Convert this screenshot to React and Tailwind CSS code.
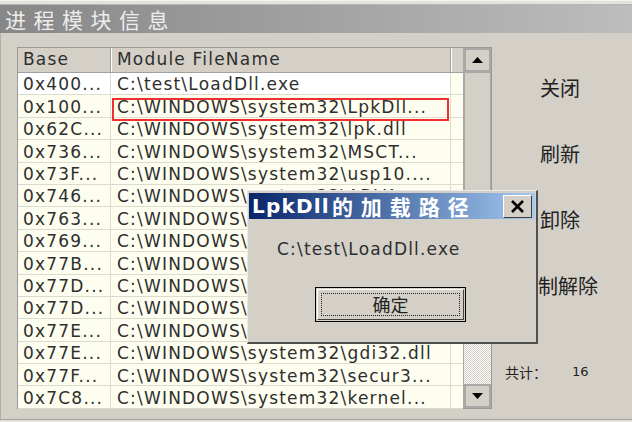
import React from "react";

const rows = [
  ["0x400...", "C:\\test\\LoadDll.exe"],
  ["0x100...", "C:\\WINDOWS\\system32\\LpkDll..."],
  ["0x62C...", "C:\\WINDOWS\\system32\\lpk.dll"],
  ["0x736...", "C:\\WINDOWS\\system32\\MSCT..."],
  ["0x73F...", "C:\\WINDOWS\\system32\\usp10...."],
  ["0x746...", "C:\\WINDOWS\\system32\\ADVA..."],
  ["0x763...", "C:\\WINDOWS\\system32\\comd..."],
  ["0x769...", "C:\\WINDOWS\\system32\\IMM3..."],
  ["0x77B...", "C:\\WINDOWS\\system32\\versi..."],
  ["0x77D...", "C:\\WINDOWS\\system32\\ADVA..."],
  ["0x77D...", "C:\\WINDOWS\\system32\\USER..."],
  ["0x77E...", "C:\\WINDOWS\\system32\\RPCR..."],
  ["0x77E...", "C:\\WINDOWS\\system32\\gdi32.dll"],
  ["0x77F...", "C:\\WINDOWS\\system32\\secur3..."],
  ["0x7C8...", "C:\\WINDOWS\\system32\\kernel..."],
];

const listFont = "font-['DejaVu_Sans',sans-serif] text-[17px] tracking-[1.2px] text-[#2e2e2e]";
const cjk = "font-['Noto_Sans_CJK_SC',sans-serif]";

export default function App() {
  return (
    <div className="relative w-[632px] h-[422px] overflow-hidden bg-[#d4d0c8] flex flex-col">
      {/* top strip */}
      <div className="h-[5px] border-t border-[#f4f4f0] bg-[#e4e2dc] border-b border-b-[#b8b6b0]" />
      {/* title bar */}
      <div className="h-[28px] bg-gradient-to-r from-[#878787] to-[#bdbdbd] flex items-center pl-[5px]">
        <span className={`${cjk} text-[21px] leading-none tracking-[7.5px] text-[#ededed]`}>进程模块信息</span>
      </div>
      {/* content */}
      <div className="flex flex-1 border-l border-[#b0b0b0]">
        <div className="ml-[16px] mt-[14px] w-[475px] h-[362px] border border-[#9a9a9a] flex">
          {/* table */}
          <div className="w-[445px] flex flex-col bg-[#fefef0]">
            <div className={`h-[25px] flex bg-[#d4d0c8] border-b border-[#a0a0a0] ${listFont}`}>
              <div className="w-[93px] pl-[5px] flex items-center border-r border-[#a0a0a0] shadow-[1px_0_0_#ffffff]">Base</div>
              <div className="w-[340px] pl-[6px] flex items-center border-r border-[#a0a0a0] shadow-[1px_0_0_#ffffff]">Module FileName</div>
              <div className="flex-1" />
            </div>
            {rows.map((r, i) => (
              <div key={i} className={`h-[22.4px] flex border-b border-[#dcdccc] ${listFont}`}>
                <div className={`w-[93px] pl-[5px] pt-[3px] flex items-center border-r border-[#dcdccc] whitespace-nowrap overflow-hidden ${i === 0 ? "bg-white" : ""}`}>{r[0]}</div>
                <div className={`w-[340px] pl-[6px] pt-[3px] flex items-center border-r border-[#dcdccc] whitespace-nowrap overflow-hidden ${i === 0 ? "bg-white" : ""}`}>{r[1]}</div>
                <div className="flex-1" />
              </div>
            ))}
          </div>
          {/* scrollbar */}
          <div className="w-[28px] flex flex-col bg-[#d4d0c8] border-l border-[#a8a8a8]">
            <div className="h-[24px] border-2 border-[#a8a8a8] flex items-center justify-center">
              <svg width="11" height="6" viewBox="0 0 11 6"><path d="M0 6 L5.5 0 L11 6 Z" fill="#000" /></svg>
            </div>
            <div className="h-[270px] border border-[#a8a8a8] bg-[#d4d0c8]" />
            <div className="flex-1 bg-[image:repeating-conic-gradient(#ffffff_0%_25%,#d4d0c8_0%_50%)] bg-[length:2px_2px]" />
            <div className="h-[24px] border-2 border-[#a8a8a8] flex items-center justify-center">
              <svg width="11" height="6" viewBox="0 0 11 6"><path d="M0 0 L5.5 6 L11 0 Z" fill="#000" /></svg>
            </div>
          </div>
        </div>
        {/* right side labels */}
        <div className="flex flex-col pt-[43px]">
          <div className="pl-[48px] flex flex-col gap-[42px]">
            <span className={`${cjk} text-[20px] leading-[24px] text-[#222]`}>关闭</span>
            <span className={`${cjk} text-[20px] leading-[24px] text-[#222]`}>刷新</span>
            <span className={`${cjk} text-[20px] leading-[24px] text-[#222]`}>卸除</span>
            <span className={`${cjk} text-[20px] leading-[24px] text-[#222] -ml-[2px]`}>制解除</span>
          </div>
          <div className="pl-[13px] mt-[66px] flex items-center h-[16px]">
            <span className={`${cjk} text-[14px] text-[#222]`}>共计：</span>
            <span className="ml-[25px] font-['DejaVu_Sans',sans-serif] text-[13px] text-[#222]">16</span>
          </div>
        </div>
      </div>
      {/* bottom edge */}
      <div className="h-[3px] border-t border-[#a0a0a0] bg-[#e4e2dc]" />

      {/* red highlight */}
      <div className="absolute left-[112px] top-[98px] w-[337px] h-[23px] border-2 border-[#ee3030]" />

      {/* dialog */}
      <div className="absolute left-[247px] top-[190px] w-[291px] h-[154px] bg-[#d4d0c8] border-t border-l border-[#e8e8e8] border-r-2 border-b-2 border-r-[#505050] border-b-[#505050] flex flex-col">
        <div className="mx-[1px] mt-[2px] h-[26px] bg-gradient-to-r from-[#0a246a] to-[#a6caf0] flex items-center pl-[3px] pr-[3px]">
          <span className="font-['DejaVu_Sans',sans-serif] font-bold text-[20px] leading-none text-white tracking-[1.2px]">LpkDll</span>
          <span className={`${cjk} font-bold text-[21px] leading-none text-white tracking-[8px] ml-[2px]`}>的加载路径</span>
          <div className="ml-auto w-[29px] h-[23px] bg-[#d4d0c8] border border-t-white border-l-white border-r-[#404040] border-b-[#404040] flex items-center justify-center">
            <svg width="15" height="13" viewBox="0 0 15 13"><path d="M2 1 L13 12 M13 1 L2 12" stroke="#000" strokeWidth="2.6" /></svg>
          </div>
        </div>
        <div className={`pl-[29px] mt-[21px] h-[20px] flex items-center ${listFont}`}>C:\test\LoadDll.exe</div>
        <div className="ml-[67px] mt-[27px] w-[151px] h-[35px] border border-black p-[1px]">
          <div className="w-full h-full border border-t-white border-l-white border-r-[#404040] border-b-[#404040] p-[3px]">
            <div className={`w-full h-full border border-dotted border-[#222] flex items-center justify-center ${cjk} text-[18px] text-[#222]`}>确定</div>
          </div>
        </div>
      </div>
    </div>
  );
}
